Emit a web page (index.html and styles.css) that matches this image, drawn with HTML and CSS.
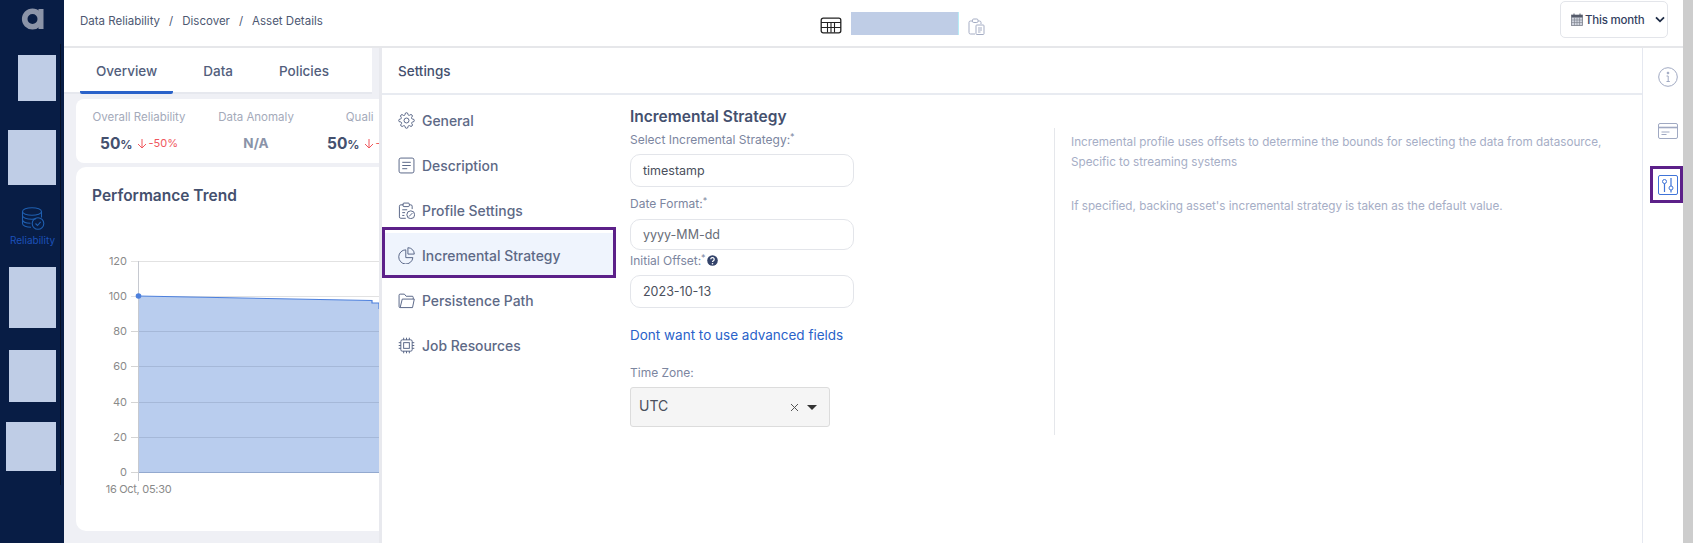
FILE: index.html
```html
<!DOCTYPE html>
<html lang="en">
<head>
<meta charset="utf-8">
<title>Asset Details</title>
<link rel="stylesheet" href="styles.css">
</head>
<body>
<div class="app">
  <aside class="sidebar">
    <div class="logo">
      <svg width="24" height="24" viewBox="0 0 24 24"><circle cx="11.5" cy="12" r="7.8" fill="none" stroke="#8b94a8" stroke-width="5.6"/><rect x="17.5" y="2" width="5" height="20" fill="#8b94a8"/></svg>
    </div>
    <div class="side-rail">
      <div class="blank b1"></div>
      <div class="blank b2"></div>
      <div class="side-item">
        <svg width="24" height="24" viewBox="0 0 24 24" fill="none" stroke="#1f5fb0" stroke-width="1.1">
          <ellipse cx="11" cy="5.5" rx="9.5" ry="3.8"/>
          <path d="M1.5 5.5v12c0 2.1 4 3.8 8.5 3.8M20.500 5.500v6M1.500 9.500c0 2.100 4.200 3.800 9.500 3.800 1.500 0 2.800-.2 4-.5M1.500 13.500c0 2.100 3.500 3.700 8 3.800"/>
          <circle cx="17" cy="17.500" r="5.800"/>
          <path d="M14.500 17.500l2 2 3.200-3.600"/>
        </svg>
        <span class="side-label">Reliability</span>
      </div>
      <div class="blank b3"></div>
      <div class="blank b4"></div>
      <div class="blank b5"></div>
    </div>
  </aside>
  <div class="main">
    <header class="topbar">
      <nav class="crumbs"><span>Data Reliability</span><span class="sep">/</span><span>Discover</span><span class="sep">/</span><span>Asset Details</span></nav>
      <div class="asset">
        <svg width="22" height="17" viewBox="0 0 22 17" fill="none" stroke="#222" stroke-width="1.300"><rect x="1.200" y="1.200" width="19.600" height="14.600" rx="2"/><path d="M1 5.500h20M1 10.500h20M7.500 5.500v10M11 5.500v10M14.500 5.500v10" stroke-width="1.100"/></svg>
        <div class="asset-name"></div>
        <svg class="asset-copy" width="17" height="17" viewBox="0 0 17 17" fill="none" stroke="#a5adc4" stroke-width="1"><path d="M10 3h1.500A1.500 1.500 0 0 1 13 4.500V6M5 3H2.500A1.500 1.500 0 0 0 1 4.500v10A1.500 1.500 0 0 0 2.500 16H7"/><rect x="4.500" y="1" width="5.500" height="3.500" rx="1.200"/><rect x="8" y="7" width="8" height="9.500" rx=".8"/><path d="M10 10h4M10 12h4M10 14h2.500"/></svg>
      </div>
      <button class="range">
        <svg width="12" height="13" viewBox="0 0 12 13"><rect x=".5" y="2" width="11" height="10.500" fill="#cfd3dd" stroke="#7a7f8c" stroke-width=".8"/><rect x=".5" y="2" width="11" height="2.500" fill="#555b6a"/><path d="M3 .5v3M9 .5v3" stroke="#555b6a"/><path d="M.5 7h11M.5 9.500h11M3.500 4.500v8M6 4.500v8M8.500 4.500v8" stroke="#7a7f8c" stroke-width=".6"/></svg>
        <span>This month</span>
        <svg width="10" height="7" viewBox="0 0 10 7" fill="none" stroke="#1d2b45" stroke-width="1.800"><path d="M1 1.300l4 4 4-4"/></svg>
      </button>
    </header>
    <div class="content">
      <div class="tabs">
        <span class="tab active">Overview</span>
        <span class="tab">Data</span>
        <span class="tab">Policies</span>
      </div>
      <section class="stats">
        <div class="stat">
          <div class="stat-label">Overall Reliability</div>
          <div class="stat-value"><b>50<small>%</small></b><svg class="down" width="10" height="11" viewBox="0 0 10 11" fill="none" stroke="#f0575d" stroke-width="1"><path d="M5 1v9M1 6l4 4 4-4"/></svg><span class="delta">-50%</span></div>
        </div>
        <div class="stat">
          <div class="stat-label">Data Anomaly</div>
          <div class="stat-value"><b class="na">N/A</b></div>
        </div>
        <div class="stat">
          <div class="stat-label">Quali<span class="cut">e</span></div>
          <div class="stat-value"><b>50<small>%</small></b><svg class="down" width="10" height="11" viewBox="0 0 10 11" fill="none" stroke="#f0575d" stroke-width="1"><path d="M5 1v9M1 6l4 4 4-4"/></svg><span class="delta">-50%</span></div>
        </div>
      </section>
      <section class="trend">
        <h2 class="trend-title">Performance Trend</h2>
        <svg class="chart" width="305" height="290" viewBox="76 215 305 290">
          <path d="M131 261.500H381M131 296.500H381" stroke="#e2e2e2"/>
          <path d="M138 296L372 300.500V303H379V308.500H381V472H138Z" fill="#b9cdee"/>
          <path d="M138 331.500H381M138 366.500H381M138 402.500H381M138 437.500H381" stroke="#a5b8d8"/>
          <path d="M131 331.500H138M131 366.500H138M131 402.500H138M131 437.500H138M131 472.500H138" stroke="#d4d4d4"/>
          <path d="M138 472.500H381" stroke="#93a9cf"/>
          <path d="M138.500 261V481" stroke="#c6c9d0"/>
          <path d="M138 296L372 300.500V303H379V308.500H381" fill="none" stroke="#4d80dd" stroke-width="1.200"/>
          <circle cx="138.500" cy="296" r="2.800" fill="#4d80dd"/>
          <g class="axis">
            <text x="127" y="264.500">120</text>
            <text x="127" y="299.500">100</text>
            <text x="127" y="335">80</text>
            <text x="127" y="370">60</text>
            <text x="127" y="405.500">40</text>
            <text x="127" y="441">20</text>
            <text x="127" y="476">0</text>
          </g>
          <text class="axis-x" x="138.500" y="493">16 Oct, 05:30</text>
        </svg>
      </section>
      <div class="panel">
        <div class="panel-body">
          <div class="panel-head">Settings</div>
          <div class="panel-cols">
            <nav class="menu">
              <div class="menu-item">
                <svg class="mi" viewBox="0 0 24 24"><circle cx="12" cy="12" r="3.500"/><path d="M19.400 15a1.650 1.650 0 0 0 .33 1.820l.06.06a2 2 0 1 1-2.830 2.830l-.06-.06a1.650 1.650 0 0 0-2.800 1.170V21a2 2 0 1 1-4 0v-.09a1.650 1.650 0 0 0-2.800-1.170l-.06.06a2 2 0 1 1-2.830-2.830l.06-.06A1.650 1.650 0 0 0 3 14H3a2 2 0 1 1 0-4h.09a1.650 1.650 0 0 0 1.170-2.800l-.06-.06a2 2 0 1 1 2.830-2.830l.06.06A1.650 1.650 0 0 0 10 3.090V3a2 2 0 1 1 4 0v.09a1.650 1.650 0 0 0 2.800 1.170l.06-.06a2 2 0 1 1 2.830 2.830l-.06.06A1.650 1.650 0 0 0 20.910 10H21a2 2 0 1 1 0 4h-.09a1.650 1.650 0 0 0-1.510 1z"/></svg>
                <span>General</span>
              </div>
              <div class="menu-item">
                <svg class="mi" viewBox="0 0 24 24"><rect x="1.500" y="1.500" width="21" height="21" rx="2.500"/><path d="M6 7.500h12M6 12h12M6 16.500h7"/></svg>
                <span>Description</span>
              </div>
              <div class="menu-item">
                <svg class="mi" viewBox="0 0 24 24"><path d="M16 4h2a2 2 0 0 1 2 2v4M8 4H4a2 2 0 0 0-2 2v15a2 2 0 0 0 2 2h7"/><rect x="7" y="1.500" width="9" height="5" rx="1.500"/><path d="M6 11h7M6 15h4M6 19h3"/><circle cx="18" cy="18" r="5.500"/><path d="M15.500 20.500l5-5"/></svg>
                <span>Profile Settings</span>
              </div>
              <div class="menu-item current">
                <svg class="mi" viewBox="0 0 24 24"><path d="M11 4a10 10 0 1 0 10 11H11z"/><path d="M14 1a9 9 0 0 1 9 9h-9z"/></svg>
                <span>Incremental Strategy</span>
              </div>
              <div class="menu-item">
                <svg class="mi" viewBox="0 0 24 24"><path d="M3 22a1.500 1.500 0 0 1-1.500-1.500v-16A1.500 1.500 0 0 1 3 3h6l2.500 3H20a1.500 1.500 0 0 1 1.500 1.500V10"/><path d="M3 22l3-12h17l-2.500 12z"/></svg>
                <span>Persistence Path</span>
              </div>
              <div class="menu-item">
                <svg class="mi" viewBox="0 0 24 24"><rect x="4" y="4" width="16" height="16" rx="2"/><rect x="8" y="8" width="8" height="8"/><path d="M8 1v3M12 1v3M16 1v3M8 20v3M12 20v3M16 20v3M1 8h3M1 12h3M1 16h3M20 8h3M20 12h3M20 16h3"/></svg>
                <span>Job Resources</span>
              </div>
            </nav>
            <form class="form">
              <h3 class="form-title">Incremental Strategy</h3>
              <label class="lbl lbl-first">Select Incremental Strategy:<sup>*</sup></label>
              <div class="input tall">timestamp</div>
              <label class="lbl lbl-date">Date Format:<sup>*</sup></label>
              <div class="input short placeholder">yyyy-MM-dd</div>
              <label class="lbl lbl-offset">Initial Offset:<sup>*</sup><svg class="q" width="11" height="11" viewBox="0 0 11 11"><circle cx="5.500" cy="5.500" r="5.300" fill="#33436a"/><path d="M3.800 4.300a1.700 1.700 0 1 1 2.600 1.400c-.6.400-.9.600-.9 1.200" fill="none" stroke="#fff" stroke-width="1.200"/><circle cx="5.500" cy="8.700" r=".8" fill="#fff"/></svg></label>
              <div class="input tall">2023-10-13</div>
              <a class="link">Dont want to use advanced fields</a>
              <label class="lbl lbl-zone">Time Zone:</label>
              <div class="select">
                <span class="select-value">UTC</span>
                <span class="select-tools">
                  <svg width="9" height="9" viewBox="0 0 9 9" stroke="#555" stroke-width="1"><path d="M1 1l7 7M8 1l-7 7"/></svg>
                  <svg class="caret" width="10" height="5" viewBox="0 0 10 5"><path d="M0 0h10L5 5z" fill="#333"/></svg>
                </span>
              </div>
            </form>
            <aside class="help">
              <p>Incremental profile uses offsets to determine the bounds for selecting the data from datasource,<br>Specific to streaming systems</p>
              <p>If specified, backing asset's incremental strategy is taken as the default value.</p>
            </aside>
          </div>
        </div>
        <div class="rail">
          <svg class="ri" viewBox="0 0 20 20" fill="none" stroke="#a0a9c2" stroke-width="1"><circle cx="10" cy="10" r="9.300"/><circle cx="10" cy="6" r=".9" fill="#a0a9c2"/><path d="M8.500 9h1.700v5.500M8.500 14.500h3.300"/></svg>
          <svg class="ri" viewBox="0 0 20 16" fill="none" stroke="#a0a9c2" stroke-width="1"><rect x=".5" y=".5" width="19" height="15" rx="1.500"/><path d="M.5 4.500h19" stroke-width="1.600"/><path d="M3.500 9h8M3.500 11.500h5"/></svg>
          <div class="ri-active">
            <svg class="ri" viewBox="0 0 20 20" fill="none" stroke="#3f74d8" stroke-width="1"><rect x=".5" y=".5" width="19" height="19" rx="1.500"/><circle cx="6.500" cy="6.500" r="2"/><path d="M6.500 8.500V17M13 3v8M13 15v2.500" stroke-width="1.200"/><circle cx="13" cy="13" r="2"/></svg>
          </div>
        </div>
      </div>
    </div>
  </div>
  <div class="scroll"></div>
</div>
</body>
</html>
```

FILE: styles.css
```css
* { box-sizing: border-box; }
html, body { margin: 0; height: 543px; overflow: hidden; }
body { font-family: Inter, "Noto Sans", "Liberation Sans", sans-serif; color: #44506e; background: #fff; }

.app { display: flex; height: 543px; }
.sidebar { width: 64px; flex: none; background: #081d45; }
.logo { height: 44px; display: flex; justify-content: center; padding: 7px 0 0 1px; }
.side-rail { width: 61px; height: 441px; border-right: 1px solid #040f26; padding-right: 4px; display: flex; flex-direction: column; align-items: flex-end; }
.blank { background: #bfcde6; }
.b1 { width: 38px; height: 46px; margin-top: 11px; }
.b2 { width: 48px; height: 55px; margin-top: 29px; }
.b3 { width: 47px; height: 61px; margin-top: 17px; }
.b4 { width: 47px; height: 52px; margin-top: 22px; }
.b5 { width: 50px; height: 49px; margin-top: 20px; }
.side-item { width: 64px; margin: 21px -8px 0 0; padding-left: 1px; display: flex; flex-direction: column; align-items: center; height: 44px; }
.side-label { font-size: 10px; color: #1c50b8; margin-top: 4px; }

.main { flex: 1; min-width: 0; display: flex; flex-direction: column; }
.topbar { height: 48px; flex: none; border-bottom: 2px solid #e6e7ea; display: flex; align-items: flex-start; padding-left: 16px; position: relative; }
.crumbs { font-size: 11.500px; color: #4d5872; display: flex; gap: 8px; margin-top: 14px; }
.sep { margin: 0 1px; }
.asset { display: flex; align-items: flex-start; margin-left: 497px; }
.asset > svg:first-child { margin-top: 17px; }
.asset-name { width: 107px; height: 23px; margin: 12px 0 0 9px; background: #bfcde6; border-right: 1px solid #b5ecf6; box-sizing: content-box; }
.asset-copy { margin: 18px 0 0 9px; }
.range { margin: 1px 15px 0 auto; width: 108px; height: 37px; background: #fff; border: 1px solid #e3e5ea; border-radius: 5px; display: flex; align-items: center; padding: 0 0 0 10px; font: 500 11.500px Inter, sans-serif; color: #33415f; }
.range span { margin: 0 10px 0 2px; white-space: nowrap; letter-spacing: -.2px; }

.content { flex: 1; background: #eff0f5; position: relative; overflow: hidden; }
.tabs { height: 46px; width: 308px; padding-left: 16px; background: #fff; border-bottom: 2px solid #e6e8ee; display: flex; gap: 14px; }
.tab { padding: 0 16px; font-size: 13.500px; line-height: 46px; height: 46px; color: #525e7c; font-weight: 500; white-space: nowrap; }
.tab.active { border-bottom: 3px solid #2a62c9; border-radius: 0 0 2px 2px; }
.stats { margin: 5px 0 0 12px; width: 400px; height: 64px; background: #fff; border-radius: 8px; display: grid; grid-template-columns: 126px 108px 112px; }
.stat { text-align: center; padding-top: 10px; white-space: nowrap; }
.stat-label { font-size: 11.500px; color: #a4aaba; line-height: 16px; }
.cut { margin-left: 6px; }
.stat-value { margin-top: 8px; height: 20px; display: flex; justify-content: center; align-items: center; gap: 4px; }
.stat-value b { font-size: 15.500px; color: #44506e; font-weight: 700; }
.stat-value small { font-size: 12px; }
.stat-value b.na { font-size: 13.500px; color: #8a93a8; }
.delta { font-size: 11px; color: #f0575d; margin-left: -2px; }
.trend { margin: 4px 0 0 12px; width: 400px; height: 364px; background: #fff; border-radius: 10px; }
.trend-title { margin: 0; height: 48px; padding: 19px 0 0 16px; font-size: 15.500px; line-height: 20px; font-weight: 600; color: #44506e; }
.chart { display: block; }
.axis text { font: 11px Inter, sans-serif; fill: #8a8a8a; text-anchor: end; }
.axis-x { font: 11px Inter, sans-serif; fill: #8a8a8a; text-anchor: middle; letter-spacing: -.3px; }

.panel { position: absolute; top: 0; right: 0; bottom: 0; left: 318px; background: #fff; display: flex; box-shadow: -3px 0 0 #e8e9ee; }
.panel-body { flex: 1; min-width: 0; display: flex; flex-direction: column; }
.panel-head { height: 47px; flex: none; border-bottom: 2px solid #e8ebf1; padding-left: 16px; font-size: 13.500px; line-height: 47px; font-weight: 500; color: #44506e; }
.panel-cols { flex: 1; display: flex; }
.menu { width: 248px; flex: none; padding-top: 3px; }
.menu-item { height: 45px; display: flex; align-items: center; gap: 7px; padding-left: 16px; margin-right: 14px; font-size: 13.900px; font-weight: 500; color: #5d6986; position: relative; white-space: nowrap; }
.mi { width: 17px; height: 17px; flex: none; fill: none; stroke: #4f5d7f; stroke-width: 1.300; }
.current { background: #eff4fd; }
.current::after { content: ""; position: absolute; left: 0; right: 0; top: -6px; bottom: 0; border: 3px solid #5c2089; }
.form { width: 424px; flex: none; display: flex; flex-direction: column; align-items: flex-start; }
.form-title { margin: 12px 0 0; font-size: 15.500px; line-height: 20px; font-weight: 600; color: #44506e; white-space: nowrap; }
.lbl { font-size: 12px; line-height: 16px; color: #7c86a0; white-space: nowrap; display: flex; align-items: flex-start; }
.lbl sup { font-size: 9px; line-height: 10px; }
.lbl-first { margin-top: 5px; }
.lbl-date { margin-top: 9px; }
.lbl-offset { margin-top: 3px; }
.lbl-zone { margin-top: 21px; }
.q { margin: 2px 0 0 1px; }
.input { width: 224px; margin-top: 6px; border: 1px solid #e3e5ea; border-radius: 10px; padding: 0 0 1px 12px; font-size: 12.500px; color: #4a4f5c; display: flex; align-items: center; }
.input.tall { height: 33px; }
.input.short { height: 31px; margin-top: 7px; }
.placeholder { color: #686d78; }
.link { margin-top: 18px; font-size: 13.500px; line-height: 18px; color: #2a62c9; white-space: nowrap; }
.select { width: 200px; height: 40px; margin-top: 6px; background: #f5f5f5; border: 1px solid #dcdcdc; border-radius: 3px; display: flex; align-items: center; justify-content: space-between; padding: 0 12px 0 8px; font-size: 14px; color: #4a4f5c; }
.select-value { margin-bottom: 3px; }
.select-tools { display: flex; align-items: center; gap: 8px; }
.help { width: 560px; height: 307px; margin-top: 33px; border-left: 1px solid #e5e7eb; padding-left: 16px; font-size: 11.700px; line-height: 20px; color: #a6aec6; }
.help p { margin: 4px 0 24px; white-space: nowrap; }
.rail { width: 41px; flex: none; border-left: 1px solid #e5e8f0; display: flex; flex-direction: column; align-items: center; padding: 19px 0 0 7px; }
.ri { width: 20px; height: 20px; display: block; margin-left: 3px; flex: none; }
.rail > .ri:nth-child(2) { margin-top: 34px; }
.ri-active { margin-top: 25px; width: 33px; height: 37px; border: 3px solid #5c2089; display: flex; align-items: center; justify-content: center; flex: none; }
.scroll { width: 10px; flex: none; background: #cdcdcd; }
```
